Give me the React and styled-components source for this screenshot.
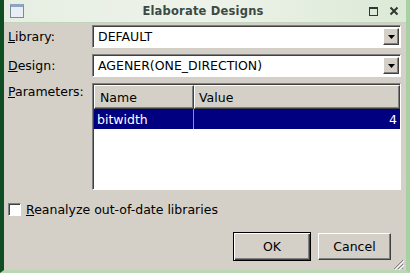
import React from "react";
import styled, { createGlobalStyle } from "styled-components";

const Global = createGlobalStyle`
  html, body { margin: 0; padding: 0; background: #d4d0c8; }
  body { font-family: "DejaVu Sans", "Liberation Sans", sans-serif; }
`;

const Window = styled.div`
  width: 410px;
  height: 273px;
  box-sizing: border-box;
  display: flex;
  flex-direction: column;
  background: #d4d0c8;
  border-left: 4px solid #0f4d22;
  border-right: 4px solid #a9cfa4;
  border-bottom: 3px solid #b9d8b2;
  overflow: hidden;
`;

const TitleBar = styled.div`
  height: 22px;
  flex: none;
  display: grid;
  grid-template-columns: 1fr auto 1fr;
  align-items: center;
  padding: 0 6px;
  background: linear-gradient(to right, #e6eee2 0%, #eef3ea 50%, #dbe9d6 100%);
  border-bottom: 1px solid #c3d6bd;
`;

const TitleText = styled.div`
  font: bold 11.5px "DejaVu Sans", sans-serif;
  color: #3c4a44;
  letter-spacing: 0.2px;
  margin-left: -4px;
`;

const WinIcon = styled.div`
  width: 12px;
  height: 10px;
  border: 1px solid #7a8aa0;
  border-top-width: 3px;
  background: #e9eef4;
  border-top-color: #8fa4c0;
`;

const Controls = styled.div`
  display: flex;
  align-items: center;
  justify-content: flex-end;
  gap: 11px;
  margin-right: 1px;
`;

const Body = styled.div`
  flex: 1;
  display: flex;
  flex-direction: column;
  padding: 2px 5px 0 4px;
`;

const FormGrid = styled.div`
  display: grid;
  grid-template-columns: 84px 1fr;
  row-gap: 6px;
`;

const Label = styled.div`
  font-size: 12.5px;
  color: #000;
  padding-top: ${p => p.$top ?? 4}px;
  u { text-decoration: underline; }
`;

const Combo = styled.div`
  height: 23px;
  box-sizing: border-box;
  display: flex;
  align-items: center;
  background: #fff;
  border: 1px solid;
  border-color: #808080 #fff #fff #808080;
  box-shadow: inset 1px 1px 0 #404040;
  padding: 0 1px 0 5px;
`;

const ComboText = styled.div`
  flex: 1;
  font-size: 12.5px;
  color: #000;
`;

const ArrowBtn = styled.div`
  width: 16px;
  height: 17px;
  box-sizing: border-box;
  background: #d4d0c8;
  border: 1px solid;
  border-color: #fff #404040 #404040 #fff;
  box-shadow: inset -1px -1px 0 #808080;
  display: flex;
  align-items: center;
  justify-content: center;
`;

const Table = styled.div`
  height: 107px;
  box-sizing: border-box;
  background: #fff;
  border: 1px solid;
  border-color: #808080 #fff #fff #808080;
  box-shadow: inset 1px 1px 0 #404040;
  padding: 1px 0 0 1px;
  display: flex;
  flex-direction: column;
`;

const Row = styled.div`
  display: grid;
  grid-template-columns: 100px 1fr;
  height: ${p => p.$h}px;
  box-sizing: border-box;
`;

const HeadCell = styled.div`
  box-sizing: border-box;
  background: #d4d0c8;
  border: 1px solid;
  border-color: #fff #404040 #404040 #fff;
  box-shadow: inset -1px -1px 0 #808080;
  font-size: 12.5px;
  display: flex;
  align-items: center;
  padding-left: ${p => p.$pad ?? 5}px;
`;

const Cell = styled.div`
  box-sizing: border-box;
  background: #000080;
  color: #fff;
  font-size: 12.5px;
  display: flex;
  align-items: center;
  padding: 0 3px 0 3px;
  justify-content: ${p => (p.$right ? "flex-end" : "flex-start")};
  border-right: ${p => (p.$right ? "none" : "1px solid #9090b8")};
`;

const CheckRow = styled.label`
  display: flex;
  align-items: center;
  gap: 5px;
  height: 13px;
  margin-top: 13px;
  font-size: 12.5px;
`;

const Check = styled.div`
  width: 13px;
  height: 13px;
  box-sizing: border-box;
  background: #fff;
  border: 1px solid;
  border-color: #808080 #fff #fff #808080;
  box-shadow: inset 1px 1px 0 #404040;
`;

const Buttons = styled.div`
  display: flex;
  justify-content: flex-end;
  align-items: flex-start;
  gap: 7px;
  margin-top: 16px;
  padding-right: 10px;
`;

const Button = styled.div`
  width: ${p => p.$w}px;
  height: ${p => (p.$def ? 29 : 27)}px;
  margin-top: ${p => (p.$def ? 0 : 1)}px;
  box-sizing: border-box;
  font-size: 12.5px;
  display: flex;
  align-items: center;
  justify-content: center;
  background: #d4d0c8;
  border: 1px solid;
  border-color: ${p => (p.$def ? "#000" : "#fff #404040 #404040 #fff")};
  box-shadow: ${p =>
    p.$def
      ? "inset 1px 1px 0 #fff, inset -1px -1px 0 #404040, inset -2px -2px 0 #808080"
      : "inset -1px -1px 0 #808080"};
`;

const Footer = styled.div`
  position: relative;
  flex: 1;
`;

const Grip = styled.svg`
  position: absolute;
  right: -3px;
  bottom: 0;
`;

const Arrow = () => (
  <svg width="7" height="4" viewBox="0 0 7 4"><path d="M0 0 H7 L3.5 4 Z" fill="#000" /></svg>
);

export default function App() {
  return (
    <>
      <Global />
      <Window>
        <TitleBar>
          <WinIcon />
          <TitleText>Elaborate Designs</TitleText>
          <Controls>
            <svg width="9" height="9" viewBox="0 0 9 9">
              <rect x="0.5" y="0.5" width="8" height="8" fill="none" stroke="#2d3a33" strokeWidth="1" />
              <rect x="0" y="0" width="9" height="2" fill="#2d3a33" />
            </svg>
            <svg width="10" height="10" viewBox="0 0 10 10">
              <path d="M1.5 1.5 L8.5 8.5 M8.5 1.5 L1.5 8.5" stroke="#2d3a33" strokeWidth="2" />
            </svg>
          </Controls>
        </TitleBar>
        <Body>
          <FormGrid>
            <Label><u>L</u>ibrary:</Label>
            <Combo>
              <ComboText>DEFAULT</ComboText>
              <ArrowBtn><Arrow /></ArrowBtn>
            </Combo>
            <Label><u>D</u>esign:</Label>
            <Combo>
              <ComboText>AGENER(ONE_DIRECTION)</ComboText>
              <ArrowBtn><Arrow /></ArrowBtn>
            </Combo>
            <Label $top={1}><u>P</u>arameters:</Label>
            <Table>
              <Row $h={24}>
                <HeadCell>Name</HeadCell>
                <HeadCell $pad={4}>Value</HeadCell>
              </Row>
              <Row $h={20}>
                <Cell>bitwidth</Cell>
                <Cell $right>4</Cell>
              </Row>
            </Table>
          </FormGrid>
          <CheckRow>
            <Check />
            <span><u>R</u>eanalyze out-of-date libraries</span>
          </CheckRow>
          <Buttons>
            <Button $def $w={78}>OK</Button>
            <Button $w={73}>Cancel</Button>
          </Buttons>
          <Footer>
            <Grip width="12" height="12" viewBox="0 0 12 12">
              <path d="M11 2 L2 11 M11 6 L6 11 M11 10 L10 11" stroke="#808080" strokeWidth="1" />
              <path d="M12 3 L3 12 M12 7 L7 12" stroke="#fff" strokeWidth="1" />
            </Grip>
          </Footer>
        </Body>
      </Window>
    </>
  );
}
